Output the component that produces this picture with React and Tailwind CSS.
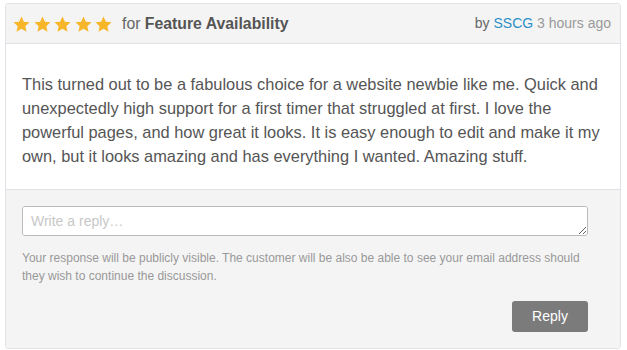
import React from 'react';

const Star = () => (
  <svg width="17" height="16" viewBox="0 0 24 23" className="block">
    <path
      d="M12 0.8l3.4 7.4 8.1 0.9-6 5.5 1.7 8-7.2-4.1-7.2 4.1 1.7-8-6-5.5 8.1-0.9z"
      fill="#f6b628"
    />
  </svg>
);

const App = () => {
  return (
    <div className="bg-white w-[627px] h-[350px] pt-[3px] pl-[5px] font-['Liberation_Sans',Arial,sans-serif]">
      <div className="w-[616px] h-[346px] border border-[#dfe3e8] rounded-[3px] overflow-hidden flex flex-col">
        <div className="h-[40px] bg-[#f4f4f4] border-b border-[#dfe3e8] flex items-center justify-between pl-[7px] pr-[9px]">
          <div className="flex items-center">
            <div className="flex gap-[3.5px] mr-[10px]">
              <Star />
              <Star />
              <Star />
              <Star />
              <Star />
            </div>
            <span className="text-[15.8px] text-[#666]">
              for <span className="font-bold text-[#555]">Feature Availability</span>
            </span>
          </div>
          <span className="text-[14px] text-[#666]">
            by <span className="text-[#2b8fc6]">SSCG</span>{' '}
            <span className="text-[#9a9a9a]">3 hours ago</span>
          </span>
        </div>
        <div className="bg-white border-b border-[#dfe3e8] pt-[28px] pb-[21px] px-[16px]">
          <p className="text-[16.4px] leading-[24px] text-[#555]">
            This turned out to be a fabulous choice for a website newbie like me. Quick and unexpectedly high support for a first timer that struggled at first. I love the powerful pages, and how great it looks. It is easy enough to edit and make it my own, but it looks amazing and has everything I wanted. Amazing stuff.
          </p>
        </div>
        <div className="flex-1 bg-[#f4f4f4] pt-[16px] px-[16px]">
          <textarea
            placeholder="Write a reply…"
            className="block w-[566px] h-[30px] bg-white border border-[#bbb] rounded-[3px] px-[8px] py-[4px] text-[14px] placeholder:text-[#c8c8c8] outline-none"
          />
          <p className="mt-[13px] text-[12px] leading-[18px] text-[#999]">
            Your response will be publicly visible. The customer will be also be able to see your email address should they wish to continue the discussion.
          </p>
          <div className="flex justify-end w-[566px] mt-[16px]">
            <button className="w-[76px] h-[31px] bg-[#7b7b7b] text-white text-[14px] rounded-[3px]">
              Reply
            </button>
          </div>
        </div>
      </div>
    </div>
  );
};

export default App;
